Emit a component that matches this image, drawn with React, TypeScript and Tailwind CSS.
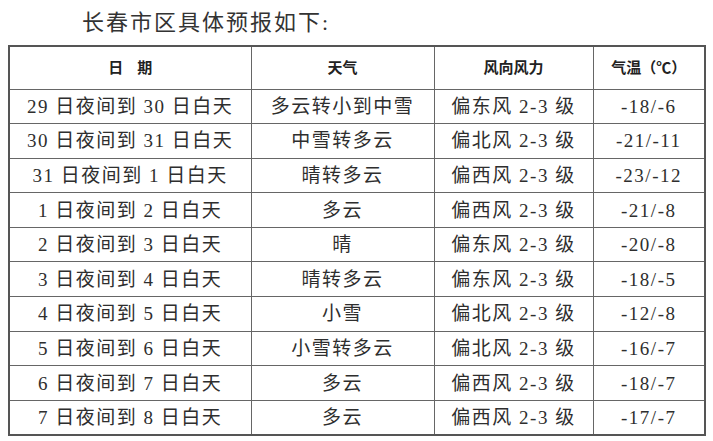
import React from 'react';

const rows = [
  ['29 日夜间到 30 日白天', '多云转小到中雪', '偏东风 2-3 级', '-18/-6'],
  ['30 日夜间到 31 日白天', '中雪转多云', '偏北风 2-3 级', '-21/-11'],
  ['31 日夜间到 1 日白天', '晴转多云', '偏西风 2-3 级', '-23/-12'],
  ['1 日夜间到 2 日白天', '多云', '偏西风 2-3 级', '-21/-8'],
  ['2 日夜间到 3 日白天', '晴', '偏东风 2-3 级', '-20/-8'],
  ['3 日夜间到 4 日白天', '晴转多云', '偏东风 2-3 级', '-18/-5'],
  ['4 日夜间到 5 日白天', '小雪', '偏北风 2-3 级', '-12/-8'],
  ['5 日夜间到 6 日白天', '小雪转多云', '偏北风 2-3 级', '-16/-7'],
  ['6 日夜间到 7 日白天', '多云', '偏西风 2-3 级', '-18/-7'],
  ['7 日夜间到 8 日白天', '多云', '偏西风 2-3 级', '-17/-7'],
];

const font = "font-['Liberation_Serif','Noto_Sans_CJK_SC',serif]";

export default function App() {
  return (
    <div className={`w-[713px] h-[441px] bg-white text-[#2e2e2e] ${font}`}>
      <div className="h-[45px] pl-[82px] flex items-center text-[22px] tracking-[2px] text-[#333]">
        长春市区具体预报如下:
      </div>
      <table className="ml-[8px] border-collapse border-2 border-[#555]">
        <thead>
          <tr className="h-[43px] text-[15px] font-bold text-[#222]">
            <th className="w-[242px] border border-[#666] tracking-[14px] pl-[14px]">日期</th>
            <th className="w-[183px] border border-[#666]">天气</th>
            <th className="w-[159px] border border-[#666]">风向风力</th>
            <th className="w-[112px] border border-[#666]">气温（℃）</th>
          </tr>
        </thead>
        <tbody>
          {rows.map((r, i) => (
            <tr key={i} className="h-[34.6px] text-[19px] leading-none tracking-[1.5px]">
              <td className="border border-[#666] text-center">{r[0]}</td>
              <td className="border border-[#666] text-center">{r[1]}</td>
              <td className="border border-[#666] text-center">{r[2]}</td>
              <td className="border border-[#666] text-center">{r[3]}</td>
            </tr>
          ))}
        </tbody>
      </table>
    </div>
  );
}
